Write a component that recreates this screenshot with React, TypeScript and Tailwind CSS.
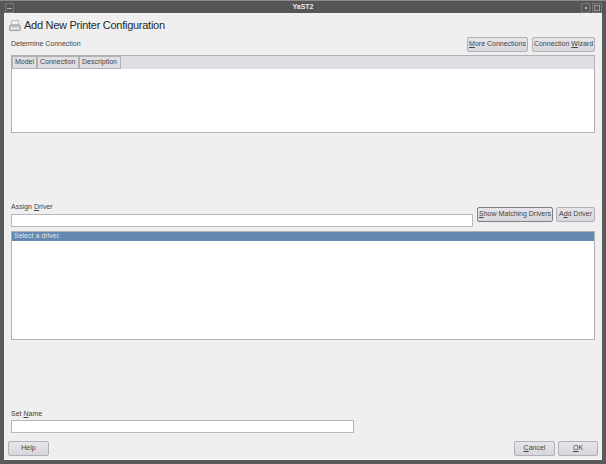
const font = { fontFamily: '"Liberation Sans", Arial, sans-serif' };

function Btn({ w, dark, children }: { w: string; dark?: boolean; children: React.ReactNode }) {
  return (
    <div
      className={`${w} flex h-[15px] items-center justify-center whitespace-nowrap rounded-[2px] border bg-gradient-to-b from-[#e6e6ea] to-[#d6d6dc] text-[7px] text-[#444] ${
        dark ? "border-[#808085]" : "border-[#b0b0b5]"
      }`}
    >
      <span>{children}</span>
    </div>
  );
}

function U({ children }: { children: React.ReactNode }) {
  return <span className="underline underline-offset-1">{children}</span>;
}

function Head({ w, children }: { w: string; children: React.ReactNode }) {
  return (
    <div className={`${w} flex h-[13px] items-center whitespace-nowrap border border-[#b0b0b5] bg-[#dfdfe4] pl-[2px] text-[7px] text-[#444]`}>
      {children}
    </div>
  );
}

function Printer() {
  return (
    <svg width="12" height="13" viewBox="0 0 13 14" className="ml-[-2px] shrink-0">
      <path d="M3 1.5h7l.6 5H2.4z" fill="#f2f2f2" stroke="#a5a5a5" strokeWidth="0.8" />
      <path d="M1.5 6.5h10l1 1.5v3.5a1 1 0 0 1-1 1h-10a1 1 0 0 1-1-1V8z" fill="#c8c8cc" stroke="#909094" strokeWidth="0.8" />
      <rect x="2" y="9.5" width="9" height="1.4" fill="#eeeeee" />
    </svg>
  );
}

export default function App() {
  return (
    <div style={font} className="flex h-[464px] w-[606px] flex-col overflow-hidden bg-[#5a5a5a]">
      <div className="relative flex h-[13px] shrink-0 items-center justify-center border-t border-[#8a8a8a] bg-[#565656]">
        <div className="absolute left-[5px] top-[2px] flex h-[10px] w-[9px] items-center justify-center border border-[#777]">
          <div className="h-px w-[5px] bg-[#aaa]" />
        </div>
        <span className="text-[7px] font-bold text-[#e8e8e8]">YaST2</span>
        <div className="absolute right-[16px] top-[2px] flex h-[10px] w-[9px] items-center justify-center border border-[#777]">
          <div className="h-[2px] w-[2px] bg-[#bbb]" />
        </div>
        <div className="absolute right-[4px] top-[2px] flex h-[10px] w-[10px] items-center justify-center border border-[#777]">
          <div className="h-[6px] w-[6px] border border-[#999]" />
        </div>
      </div>

      <div className="mx-[4px] mb-[4px] flex flex-1 flex-col border-b border-white bg-[#efefef] pl-[7px] pr-[7px]">
        <div className="mt-[5px] flex h-[14px] items-center gap-[3px]">
          <Printer />
          <span className="text-[11px] leading-none tracking-[-0.27px] text-[#2a2a2a]">Add New Printer Configuration</span>
        </div>

        <div className="mt-[5px] flex h-[15px] items-center justify-between">
          <span className="text-[7px] text-[#444]">Determine Connection</span>
          <div className="flex gap-[4px]">
            <Btn w="w-[61px]"><U>M</U>ore Connections</Btn>
            <Btn w="w-[63px]">Connection <U>W</U>izard</Btn>
          </div>
        </div>

        <div className="mt-[3px] h-[78px] border border-[#b0b0b5] bg-white">
          <div className="flex h-[13px] bg-[#dedee3]">
            <Head w="w-[25px]">Model</Head>
            <Head w="w-[42px]">Connection</Head>
            <Head w="w-[42px]">Description</Head>
          </div>
        </div>

        <div className="mt-[69px] flex items-start">
          <div className="flex w-[462px] flex-col">
            <span className="h-[10px] text-[7px] leading-[10px] text-[#444]">Assign <U>D</U>river</span>
            <div className="mt-[2px] h-[13px] border border-[#b8b8bc] bg-white" />
          </div>
          <div className="ml-auto mt-[5px] flex gap-[3px]">
            <Btn w="w-[76px]" dark><U>S</U>how Matching Drivers</Btn>
            <Btn w="w-[39px]">A<U>d</U>d Driver</Btn>
          </div>
        </div>

        <div className="mt-[4px] h-[109px] border border-[#b0b0b5] bg-white">
          <div className="flex h-[9px] items-center bg-[#6389b1] pl-[2px] text-[7px] text-[#dfe7ef]">Select a driver.</div>
        </div>

        <span className="mt-[69px] h-[10px] text-[7px] leading-[10px] text-[#444]">Set <U>N</U>ame</span>
        <div className="mt-[1px] h-[13px] w-[343px] border border-[#b8b8bc] bg-white" />

        <div className="ml-[-3px] mr-[-3px] mt-[8px] flex">
          <Btn w="w-[41px]">Help</Btn>
          <div className="ml-auto flex gap-[3px]">
            <Btn w="w-[41px]"><U>C</U>ancel</Btn>
            <Btn w="w-[40px]"><U>O</U>K</Btn>
          </div>
        </div>
      </div>
    </div>
  );
}
